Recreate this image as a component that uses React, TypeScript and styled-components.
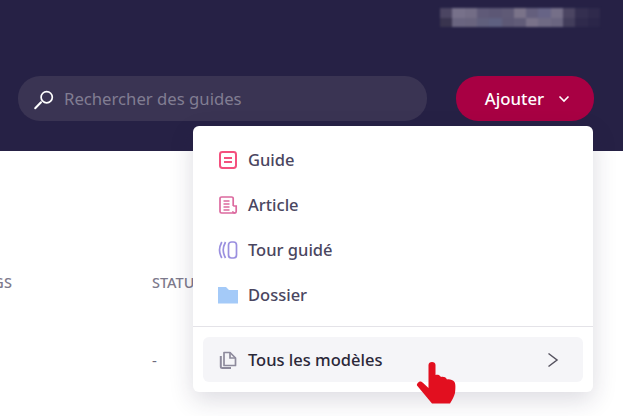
import React from 'react';
import styled, { createGlobalStyle } from 'styled-components';

const mosaicTop = ['#4b4562', '#77718a', '#736d86', '#5f5a78', '#5c5775', '#5f5a76', '#7a7389', '#645f7d', '#676486', '#756f88', '#4b4562', '#342f50', '#2f2a4c'];
const mosaicBottom = ['#39344f', '#6a6580', '#69647e', '#605f7c', '#5e6080', '#5d5875', '#615c78', '#797289', '#6f6a84', '#6a6580', '#423d5b', '#2f2a4c', '#2b2649'];

const App = () => {
  return (
    <Page>
      <GlobalStyle />
      <Header>
        <TopBar>
          <UserName aria-label="Nom masqué">
            {mosaicTop.map((c, i) => <Cell key={i} $color={c} />)}
            {mosaicBottom.map((c, i) => <Cell key={i} $color={c} />)}
          </UserName>
        </TopBar>
        <Actions>
          <Search>
            <svg width="22" height="22" viewBox="0 0 22 22" fill="none" stroke="#fff" strokeWidth="1.7" strokeLinecap="round">
              <circle cx="14.7" cy="9.200" r="5.600" />
              <path d="M9 14.200 3.200 20.300" strokeWidth="2" />
            </svg>
            <SearchText>Rechercher des guides</SearchText>
          </Search>
          <AddButton>
            Ajouter
            <svg width="12" height="8" viewBox="0 0 12 8" fill="none" stroke="#fff" strokeWidth="1.600">
              <path d="M1.500 1.500 6 6l4.500-4.500" />
            </svg>
          </AddButton>
        </Actions>
      </Header>

      <TableHead>
        <HeadCell $width={152} $shift={-23}>TAGS</HeadCell>
        <HeadCell $width={80} $shift={0}>STATUT</HeadCell>
      </TableHead>
      <TableRow>
        <RowCell>-</RowCell>
      </TableRow>

      <Menu>
        <MenuList>
          <MenuItem>
            <IconSlot>
              <svg width="20" height="20" viewBox="0 0 20 20" fill="none" stroke="#f4507e" strokeWidth="2">
                <rect x="2" y="2" width="16" height="16" rx="2.400" />
                <path d="M6 8h8M6 12h8" />
              </svg>
            </IconSlot>
            Guide
          </MenuItem>
          <MenuItem>
            <IconSlot>
              <svg width="20" height="20" viewBox="0 0 20 20" fill="none" stroke="#dc6a9f" strokeWidth="1.700">
                <path d="M15.200 11V3.600c0-.9-.7-1.600-1.600-1.600H3.600C2.700 2 2 2.700 2 3.600v12.800c0 .9.700 1.600 1.600 1.600H17" />
                <path d="M15.200 11h3v5.200a1.700 1.700 0 0 1-3.400 0" />
                <path d="M5.500 6h6M5.500 9h6M5.500 12h6M5.500 15h6" />
              </svg>
            </IconSlot>
            Article
          </MenuItem>
          <MenuItem>
            <IconSlot>
              <svg width="20" height="20" viewBox="0 0 20 20" fill="none" stroke="#9a8fdf" strokeWidth="1.700">
                <rect x="10.500" y="2" width="8" height="16" rx="3" />
                <path d="M3.800 2C2 5.500 1.500 7.500 1.500 10s.5 4.500 2.300 8M7.500 2C5.700 5.500 5.200 7.500 5.200 10s.5 4.500 2.300 8" />
              </svg>
            </IconSlot>
            Tour guidé
          </MenuItem>
          <MenuItem>
            <IconSlot>
              <svg width="20" height="18" viewBox="0 0 20 18" fill="#a4caf8">
                <path d="M0 1h8l3 3h9v13.500H0z" />
              </svg>
            </IconSlot>
            Dossier
          </MenuItem>
        </MenuList>
        <Divider />
        <TemplatesRow>
          <IconSlot>
            <svg width="20" height="20" viewBox="0 0 20 20" fill="none" stroke="#8d8a9c" strokeWidth="1.700">
              <path d="M6 2.500h6l5.500 5.500v7.500H6z" strokeLinejoin="round" />
              <path d="M12 2.500V8h5.500" />
              <path d="M2.800 6v10.500c0 .8.700 1.500 1.500 1.500H13" strokeWidth="2" />
            </svg>
          </IconSlot>
          <TemplatesLabel>Tous les modèles</TemplatesLabel>
          <svg width="12" height="16" viewBox="0 0 12 16" fill="none" stroke="#55525f" strokeWidth="1.500">
            <path d="M1.500 1.500 10 8l-8.500 6.500" />
          </svg>
        </TemplatesRow>
      </Menu>

      <Pointer width="40" height="44" viewBox="0 0 40 44">
        <path
          fill="#e20f1f"
          d="M12.500 27V4C12.500 2 14 1 16 1S19.500 2 19.500 4V14C21 13.500 23.500 13.500 25 16C27 15.500 30 16 31 18.500C33.500 18 37 19 38.500 21C39.800 23 39.500 28 39 32C38 36 36 39 34 42.500H16L1 24.500C.5 23 2.500 20 5 20.500C7.500 21.500 10 25 12.500 27z"
        />
      </Pointer>
    </Page>
  );
};

export default App;

const GlobalStyle = createGlobalStyle`
  html, body {
    margin: 0;
    background: #fff;
    overflow: hidden;
  }
`
const Page = styled.div`
  position: relative;
  width: 623px;
  height: 416px;
  overflow: hidden;
  font-family: "Noto Sans", "Open Sans", sans-serif;
`
const Header = styled.header`
  height: 151px;
  box-sizing: border-box;
  padding: 8px 29px 0 18px;
  background-color: #262145;
  display: flex;
  flex-direction: column;
`
const TopBar = styled.div`
  height: 68px;
  display: flex;
  justify-content: flex-end;
`
const UserName = styled.div`
  width: 160px;
  height: 19px;
  display: grid;
  grid-template-columns: repeat(13, 1fr);
  grid-template-rows: 1fr 1fr;
  margin-right: -6px;
  filter: blur(1px);
`
const Cell = styled.span<{ $color: string }>`
  background-color: ${p => p.$color};
`
const Actions = styled.div`
  display: flex;
  align-items: stretch;
  gap: 29px;
  height: 45px;
`
const Search = styled.div`
  flex: 1;
  display: flex;
  align-items: center;
  gap: 10px;
  padding-left: 14px;
  border-radius: 22px;
  background-color: #3a3453;
`
const SearchText = styled.span`
  font-size: 16.700px;
  color: #817d92;
`
const AddButton = styled.div`
  width: 138px;
  box-sizing: border-box;
  padding-left: 5px;
  display: flex;
  align-items: center;
  justify-content: center;
  gap: 14px;
  border-radius: 22px;
  background-color: #a80043;
  color: #fff;
  font-size: 16.800px;
  font-weight: 500;
`
const TableHead = styled.div`
  display: flex;
  padding-top: 121px;
  color: #7d7a8c;
  font-size: 14.500px;
  font-weight: 500;
  line-height: 20px;
`
const HeadCell = styled.div<{ $width: number; $shift: number }>`
  width: ${p => p.$width}px;
  flex: none;
  white-space: nowrap;
  text-indent: ${p => p.$shift}px;
`
const TableRow = styled.div`
  padding: 58px 0 0 152px;
`
const RowCell = styled.div`
  color: #6d6a7c;
  font-size: 15px;
  line-height: 20px;
`
const Menu = styled.div`
  position: absolute;
  left: 193px;
  top: 126px;
  width: 400px;
  height: 266px;
  box-sizing: border-box;
  border-radius: 6px;
  background: #fff;
  box-shadow: 0 8px 24px rgba(38, 33, 69, 0.16);
  display: flex;
  flex-direction: column;
`
const MenuList = styled.div`
  height: 200px;
  box-sizing: border-box;
  padding-top: 11px;
  display: flex;
  flex-direction: column;
`
const MenuItem = styled.div`
  height: 45px;
  display: flex;
  align-items: center;
  gap: 10px;
  padding-left: 25px;
  font-size: 16.500px;
  font-weight: 500;
  color: #4a4660;
`
const IconSlot = styled.span`
  width: 20px;
  height: 20px;
  display: flex;
  align-items: center;
  justify-content: center;
  flex: none;
`
const Divider = styled.div`
  height: 1px;
  background-color: #e4e3e8;
`
const TemplatesRow = styled.div`
  height: 45px;
  margin: 10px 10px 0;
  padding: 0 24px 0 15px;
  display: flex;
  align-items: center;
  gap: 10px;
  border-radius: 6px;
  background-color: #f5f5f8;
`
const TemplatesLabel = styled.span`
  flex: 1;
  font-size: 16.500px;
  font-weight: 500;
  color: #2b2838;
`
const Pointer = styled.svg`
  position: absolute;
  left: 416px;
  top: 361px;
`
